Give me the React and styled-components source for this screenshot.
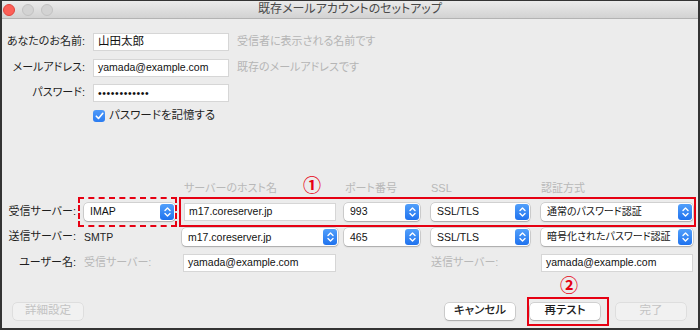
import React from "react";
import styled, { createGlobalStyle } from "styled-components";

const Global = createGlobalStyle`
  html, body { margin: 0; padding: 0; background: #ececec; }
  * { box-sizing: border-box; }
  body { font-family: "Liberation Sans", "Noto Sans CJK JP", sans-serif; }
`;

const Window = styled.div`
  position: relative;
  width: 700px;
  height: 330px;
  background: #ececec;
  border: 1px solid #333;
  border-width: 1px 2px 2px 2px;
  display: flex;
  flex-direction: column;
  overflow: hidden;
  font-size: 11px;
  line-height: 1.2;
  color: #1e1e1e;
  font-feature-settings: "palt";
`;

const TitleBar = styled.div`
  position: relative;
  height: 18px;
  flex: none;
  background: linear-gradient(#ebebeb, #d2d2d2);
  border-bottom: 1px solid #b3b3b3;
  display: flex;
  align-items: center;
  padding-left: 1px;
  gap: 7px;
`;

const Light = styled.span`
  width: 12px;
  height: 12px;
  border-radius: 50%;
  background: ${(p) => (p.$active ? "#fd5f57" : "#d3d3d3")};
  border: 0.5px solid ${(p) => (p.$active ? "#e0443e" : "#c2c2c2")};
`;

const Title = styled.div`
  position: absolute;
  inset: 0;
  display: flex;
  align-items: center;
  justify-content: center;
  font-size: 12px;
  color: #4a4a4a;
  pointer-events: none;
`;

const Body = styled.div`
  flex: 1;
  display: flex;
  flex-direction: column;
`;

const IdentityForm = styled.div`
  display: grid;
  grid-template-columns: 83px 136px auto;
  grid-auto-rows: 18px;
  column-gap: 8px;
  row-gap: 7.5px;
  padding-top: 14px;
  align-items: center;
`;

const Label = styled.div`
  text-align: right;
  white-space: nowrap;
  color: #1e1e1e;
`;

const Hint = styled.div`
  color: #b5b5b5;
  white-space: nowrap;
`;

const TextInput = styled.div`
  height: 18px;
  width: ${(p) => p.$w || "100%"};
  margin-left: ${(p) => p.$ml || "0px"};
  background: #fff;
  border: 1px solid #d6d6d6;
  padding-left: 4px;
  display: flex;
  align-items: center;
  font-size: ${(p) => (p.$jp ? "11.5px" : "10.5px")};
  color: #111;
  white-space: nowrap;
  overflow: hidden;
  letter-spacing: ${(p) => (p.$dots ? "0.6px" : "0")};
`;

const CheckRow = styled.label`
  display: flex;
  align-items: center;
  gap: 4px;
  margin: 8px 0 0 91px;
  height: 12px;
  font-size: 11.5px;
`;

const CheckBox = styled.span`
  width: 12px;
  height: 12px;
  border-radius: 3px;
  background: linear-gradient(#4f9af9, #2a7cf1);
  display: flex;
  align-items: center;
  justify-content: center;
`;

const ServerGrid = styled.div`
  margin-top: 61px;
  display: grid;
  grid-template-columns: 82px 98px 162px 87px 110px 152px;
  grid-template-rows: 12px 18px 18px 18px;
  row-gap: 7.5px;
  align-items: center;
`;

const ColHead = styled.div`
  color: #b8b8b8;
  padding-left: ${(p) => p.$pl || "0px"};
  white-space: nowrap;
  font-size: 11px;
`;

const RowLabel = styled.div`
  text-align: right;
  padding-right: 8px;
  white-space: nowrap;
`;

const PlainValue = styled.div`
  color: ${(p) => (p.$muted ? "#b8b8b8" : "#1e1e1e")};
  white-space: nowrap;
  font-size: ${(p) => (p.$muted ? "11px" : "10.5px")};
`;

const SelectBox = styled.div`
  position: relative;
  width: ${(p) => p.$w};
  height: 18px;
  background: #fff;
  border-radius: 4px;
  box-shadow: 0 0 0 0.5px rgba(0, 0, 0, 0.22), 0 1px 1.5px rgba(0, 0, 0, 0.2);
  display: flex;
  align-items: center;
  padding-left: 6px;
  font-size: ${(p) => (p.$jp ? "10px" : "10.5px")};
  color: #111;
  white-space: nowrap;
`;

const Stepper = styled.span`
  position: absolute;
  right: 1px;
  top: 1px;
  bottom: 1px;
  width: 14px;
  border-radius: 3px;
  background: linear-gradient(#52a0fb, #1f72ee);
  display: flex;
  align-items: center;
  justify-content: center;
`;

const ButtonRow = styled.div`
  margin-top: 31px;
  display: flex;
  align-items: center;
  padding: 0 12px 0 11px;
`;

const Spacer = styled.div`
  flex: 1;
`;

const Button = styled.div`
  width: 70px;
  height: 17px;
  border-radius: 4px;
  margin-left: ${(p) => p.$ml || "0px"};
  display: flex;
  align-items: center;
  justify-content: center;
  font-size: 11.5px;
  background: ${(p) => (p.$disabled ? "#f1f1f1" : "#fff")};
  color: ${(p) => (p.$disabled ? "#c3c3c3" : "#1e1e1e")};
  box-shadow: ${(p) =>
    p.$disabled
      ? "0 0 0 0.5px rgba(0,0,0,0.12)"
      : "0 0 0 0.5px rgba(0,0,0,0.22), 0 1px 1.5px rgba(0,0,0,0.2)"};
  font-weight: ${(p) => (p.$disabled ? 400 : 500)};
`;

const RedBox = styled.div`
  position: absolute;
  left: ${(p) => p.$x}px;
  top: ${(p) => p.$y}px;
  width: ${(p) => p.$w}px;
  height: ${(p) => p.$h}px;
  border: 2px ${(p) => (p.$dashed ? "dashed" : "solid")} #e60012;
  pointer-events: none;
`;

const Marker = styled.div`
  position: absolute;
  left: ${(p) => p.$x}px;
  top: ${(p) => p.$y}px;
  width: 20px;
  height: 18px;
  display: flex;
  align-items: center;
  justify-content: center;
  color: #e60012;
  font-family: "Noto Sans CJK JP", sans-serif;
  font-weight: 700;
  font-size: 18px;
  line-height: 1;
`;

const Chevrons = () => (
  <svg width="9" height="12" viewBox="0 0 9 12" fill="none" stroke="#fff" strokeWidth="1.4" strokeLinecap="round" strokeLinejoin="round">
    <path d="M2 4.5 L4.5 2 L7 4.5" />
    <path d="M2 7.5 L4.5 10 L7 7.5" />
  </svg>
);

const Select = ({ w, children, jp }) => (
  <SelectBox $w={w} $jp={jp}>
    {children}
    <Stepper>
      <Chevrons />
    </Stepper>
  </SelectBox>
);

export default function App() {
  return (
    <>
      <Global />
      <Window>
        <TitleBar>
          <Light $active />
          <Light />
          <Light />
          <Title>既存メールアカウントのセットアップ</Title>
        </TitleBar>
        <Body>
          <IdentityForm>
            <Label>あなたのお名前:</Label>
            <TextInput $jp>山田太郎</TextInput>
            <Hint>受信者に表示される名前です</Hint>
            <Label>メールアドレス:</Label>
            <TextInput>yamada@example.com</TextInput>
            <Hint>既存のメールアドレスです</Hint>
            <Label>パスワード:</Label>
            <TextInput $dots>••••••••••••</TextInput>
            <span />
          </IdentityForm>
          <CheckRow>
            <CheckBox>
              <svg width="9" height="8" viewBox="0 0 9 8" fill="none" stroke="#fff" strokeWidth="1.6" strokeLinecap="round" strokeLinejoin="round">
                <path d="M1.3 4.2 L3.5 6.4 L7.8 1.3" />
              </svg>
            </CheckBox>
            パスワードを記憶する
          </CheckRow>

          <ServerGrid>
            <span />
            <span />
            <ColHead $pl="2px">サーバーのホスト名</ColHead>
            <ColHead $pl="1px">ポート番号</ColHead>
            <ColHead>SSL</ColHead>
            <ColHead>認証方式</ColHead>

            <RowLabel>受信サーバー:</RowLabel>
            <Select w="91px">IMAP</Select>
            <TextInput $w="152px" $ml="2px">m17.coreserver.jp</TextInput>
            <Select w="76px">993</Select>
            <Select w="99px">SSL/TLS</Select>
            <Select w="152px" jp>通常のパスワード認証</Select>

            <RowLabel>送信サーバー:</RowLabel>
            <PlainValue>SMTP</PlainValue>
            <Select w="156px">m17.coreserver.jp</Select>
            <Select w="76px">465</Select>
            <Select w="99px">SSL/TLS</Select>
            <Select w="152px" jp>暗号化されたパスワード認証</Select>

            <RowLabel>ユーザー名:</RowLabel>
            <PlainValue $muted>受信サーバー:</PlainValue>
            <TextInput $w="153px" $ml="1px">yamada@example.com</TextInput>
            <span />
            <PlainValue $muted>送信サーバー:</PlainValue>
            <TextInput $w="152px">yamada@example.com</TextInput>
          </ServerGrid>

          <ButtonRow>
            <Button $disabled>詳細設定</Button>
            <Spacer />
            <Button>キャンセル</Button>
            <Button $ml="15px">再テスト</Button>
            <Button $ml="16px" $disabled>完了</Button>
          </ButtonRow>
        </Body>

        <RedBox $dashed $x={76} $y={196} $w={99} $h={30} />
        <RedBox $x={177} $y={196} $w={517} $h={30} />
        <Marker $x={300} $y={174}>①</Marker>
        <Marker $x={557} $y={274}>②</Marker>
        <RedBox $x={525} $y={296} $w={82} $h={29} />
      </Window>
    </>
  );
}
